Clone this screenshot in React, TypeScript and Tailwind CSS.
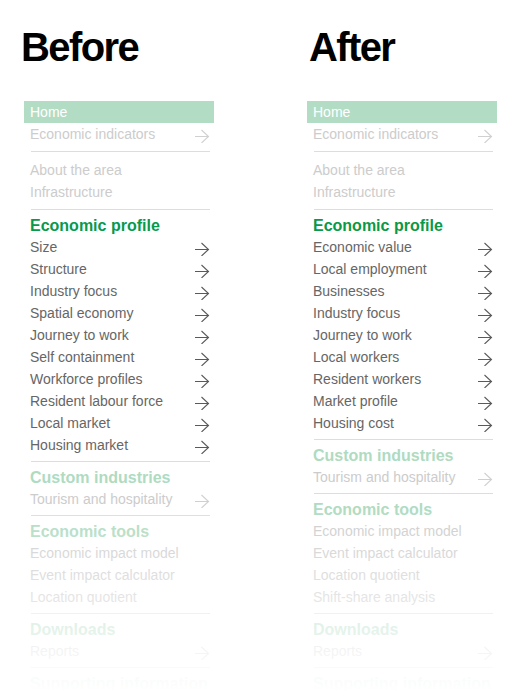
import React from 'react';

type NavEntry =
  | { kind: 'home'; label: string }
  | { kind: 'item'; label: string; arrow?: boolean; faded?: boolean }
  | { kind: 'heading'; label: string; faded?: boolean }
  | { kind: 'divider'; spacing: 'tight' | 'top' | 'section' };

const topEntries: NavEntry[] = [
  { kind: 'home', label: 'Home' },
  { kind: 'item', label: 'Economic indicators', arrow: true, faded: true },
  { kind: 'divider', spacing: 'tight' },
  { kind: 'item', label: 'About the area', faded: true },
  { kind: 'item', label: 'Infrastructure', faded: true },
  { kind: 'divider', spacing: 'top' },
];

const bottomEntries = (tools: string[]): NavEntry[] => [
  { kind: 'divider', spacing: 'section' },
  { kind: 'heading', label: 'Custom industries', faded: true },
  { kind: 'item', label: 'Tourism and hospitality', arrow: true, faded: true },
  { kind: 'divider', spacing: 'section' },
  { kind: 'heading', label: 'Economic tools', faded: true },
  ...tools.map((t) => ({ kind: 'item', label: t, faded: true }) as NavEntry),
  { kind: 'divider', spacing: 'section' },
  { kind: 'heading', label: 'Downloads', faded: true },
  { kind: 'item', label: 'Reports', arrow: true, faded: true },
  { kind: 'divider', spacing: 'section' },
  { kind: 'heading', label: 'Supporting information', faded: true },
];

const profile = (items: string[]): NavEntry[] => [
  { kind: 'heading', label: 'Economic profile' },
  ...items.map((label) => ({ kind: 'item', label, arrow: true }) as NavEntry),
];

const beforeNav: NavEntry[] = [
  ...topEntries,
  ...profile([
    'Size',
    'Structure',
    'Industry focus',
    'Spatial economy',
    'Journey to work',
    'Self containment',
    'Workforce profiles',
    'Resident labour force',
    'Local market',
    'Housing market',
  ]),
  ...bottomEntries(['Economic impact model', 'Event impact calculator', 'Location quotient']),
];

const afterNav: NavEntry[] = [
  ...topEntries,
  ...profile([
    'Economic value',
    'Local employment',
    'Businesses',
    'Industry focus',
    'Journey to work',
    'Local workers',
    'Resident workers',
    'Market profile',
    'Housing cost',
  ]),
  ...bottomEntries([
    'Economic impact model',
    'Event impact calculator',
    'Location quotient',
    'Shift-share analysis',
  ]),
];

const dividerSpacing = {
  tight: 'mt-[6px] mb-[7px]',
  top: 'mt-[6px] mb-[5px]',
  section: 'mt-[5px] mb-[5px]',
};

const Arrow = ({ faded }: { faded?: boolean }) => (
  <svg
    width="16"
    height="14"
    viewBox="0 0 16 14"
    fill="none"
    className={faded ? 'text-[#d0d0d0]' : 'text-[#5a5a5a]'}
  >
    <path d="M1 7.5h14M7.5 1l7 6.5-7 6.5" stroke="currentColor" strokeWidth="1.1" />
  </svg>
);

const NavList = ({ entries }: { entries: NavEntry[] }) => (
  <nav className="w-[190px] flex flex-col">
    {entries.map((entry, i) => {
      if (entry.kind === 'home') {
        return (
          <div key={i} className="h-[22px] bg-[#b3dcc5] pl-[6px] text-[14px] leading-[22px] text-white">
            {entry.label}
          </div>
        );
      }
      if (entry.kind === 'divider') {
        return <div key={i} className={`h-px bg-[#dddddd] ml-[7px] mr-[4px] ${dividerSpacing[entry.spacing]}`} />;
      }
      if (entry.kind === 'heading') {
        return (
          <div
            key={i}
            className={`h-[21px] pl-[6px] text-[16px] font-bold leading-[21px] ${
              entry.faded ? 'text-[#afdbc1]' : 'text-[#08994a]'
            }`}
          >
            {entry.label}
          </div>
        );
      }
      return (
        <div key={i} className="h-[22px] flex items-center justify-between pl-[6px] pr-[4px]">
          <span
            className={`text-[14px] leading-[22px] ${entry.faded ? 'text-[#cccccc]' : 'text-[#666666]'}`}
          >
            {entry.label}
          </span>
          {entry.arrow && (
            <span className="mt-[3px]">
              <Arrow faded={entry.faded} />
            </span>
          )}
        </div>
      );
    })}
  </nav>
);

export default function App() {
  return (
    <div className="relative h-[699px] overflow-hidden bg-white font-['Liberation_Sans',Arial,sans-serif]">
      <div className="flex gap-[93px] pl-[24px] pt-[27px]">
        <div className="flex flex-col">
          <h1 className="-ml-[3px] mb-[34px] text-[40px] leading-[40px] font-bold tracking-[-1.6px] text-black">
            Before
          </h1>
          <NavList entries={beforeNav} />
        </div>
        <div className="flex flex-col">
          <h1 className="ml-[2px] mb-[34px] text-[40px] leading-[40px] font-bold tracking-[-1.6px] text-black">
            After
          </h1>
          <NavList entries={afterNav} />
        </div>
      </div>
      {/* fade the lower part of both menus */}
      <div className="pointer-events-none absolute left-0 right-0 top-[505px] bottom-0 bg-linear-to-b from-white/0 to-white to-[97%]" />
    </div>
  );
}
